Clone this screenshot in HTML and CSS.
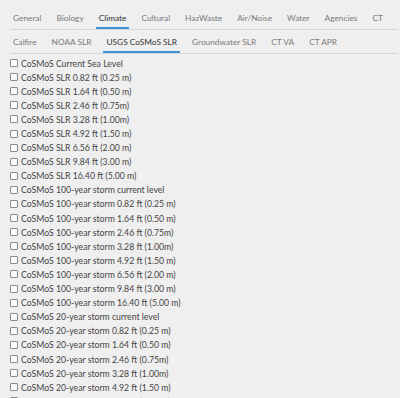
FILE: index.html
```html
<!DOCTYPE html>
<html lang="en">
<head>
    <meta charset="UTF-8">
    <meta name="viewport" content="width=device-width, initial-scale=1.0">
    <title>Layers - Climate</title>
    <link rel="stylesheet" href="styles.css">
</head>
<body>
    <div class="panel">
        <nav class="tabs">
            <a href="#">General</a>
            <a href="#">Biology</a>
            <a href="#" class="active">Climate</a>
            <a href="#">Cultural</a>
            <a href="#">HazWaste</a>
            <a href="#">Air/Noise</a>
            <a href="#">Water</a>
            <a href="#">Agencies</a>
            <a href="#">CT</a>
        </nav>
        <nav class="tabs">
            <a href="#">Calfire</a>
            <a href="#">NOAA SLR</a>
            <a href="#" class="active">USGS CoSMoS SLR</a>
            <a href="#">Groundwater SLR</a>
            <a href="#">CT VA</a>
            <a href="#">CT APR</a>
        </nav>
        <ul class="layers">
            <li><label><input type="checkbox">CoSMoS Current Sea Level</label></li>
            <li><label><input type="checkbox">CoSMoS SLR 0.82 ft (0.25 m)</label></li>
            <li><label><input type="checkbox">CoSMoS SLR 1.64 ft (0.50 m)</label></li>
            <li><label><input type="checkbox">CoSMoS SLR 2.46 ft (0.75m)</label></li>
            <li><label><input type="checkbox">CoSMoS SLR 3.28 ft (1.00m)</label></li>
            <li><label><input type="checkbox">CoSMoS SLR 4.92 ft (1.50 m)</label></li>
            <li><label><input type="checkbox">CoSMoS SLR 6.56 ft (2.00 m)</label></li>
            <li><label><input type="checkbox">CoSMoS SLR 9.84 ft (3.00 m)</label></li>
            <li><label><input type="checkbox">CoSMoS SLR 16.40 ft (5.00 m)</label></li>
            <li><label><input type="checkbox">CoSMoS 100-year storm current level</label></li>
            <li><label><input type="checkbox">CoSMoS 100-year storm 0.82 ft (0.25 m)</label></li>
            <li><label><input type="checkbox">CoSMoS 100-year storm 1.64 ft (0.50 m)</label></li>
            <li><label><input type="checkbox">CoSMoS 100-year storm 2.46 ft (0.75m)</label></li>
            <li><label><input type="checkbox">CoSMoS 100-year storm 3.28 ft (1.00m)</label></li>
            <li><label><input type="checkbox">CoSMoS 100-year storm 4.92 ft (1.50 m)</label></li>
            <li><label><input type="checkbox">CoSMoS 100-year storm 6.56 ft (2.00 m)</label></li>
            <li><label><input type="checkbox">CoSMoS 100-year storm 9.84 ft (3.00 m)</label></li>
            <li><label><input type="checkbox">CoSMoS 100-year storm 16.40 ft (5.00 m)</label></li>
            <li><label><input type="checkbox">CoSMoS 20-year storm current level</label></li>
            <li><label><input type="checkbox">CoSMoS 20-year storm 0.82 ft (0.25 m)</label></li>
            <li><label><input type="checkbox">CoSMoS 20-year storm 1.64 ft (0.50 m)</label></li>
            <li><label><input type="checkbox">CoSMoS 20-year storm 2.46 ft (0.75m)</label></li>
            <li><label><input type="checkbox">CoSMoS 20-year storm 3.28 ft (1.00m)</label></li>
            <li><label><input type="checkbox">CoSMoS 20-year storm 4.92 ft (1.50 m)</label></li>
            <li><label><input type="checkbox">CoSMoS 20-year storm 6.56 ft (2.00 m)</label></li>
        </ul>
    </div>
</body>
</html>
```

FILE: styles.css
```css
* {
    margin: 0;
    padding: 0;
    box-sizing: border-box;
}

body {
    font-family: Lato, "Liberation Sans", Arial, sans-serif;
    background: #efefef;
    color: #4a4a4a;
    overflow: hidden;
}

.panel {
    padding: 6px 2px 0 10px;
}

.tabs {
    display: flex;
    gap: 9px;
    border-bottom: 1px solid #d6d6d6;
}

.tabs a {
    padding: 3px 3px 0;
    line-height: 18px;
    font-size: 8.3px;
    color: #7a7a7a;
    text-decoration: none;
    border-bottom: 2px solid transparent;
}

.tabs a.active {
    color: #333;
    border-bottom-color: #3b93d6;
}

.layers {
    list-style: none;
    margin-top: 2px;
}

.layers li {
    height: 14.1px;
    display: flex;
    align-items: center;
}

.layers label {
    display: flex;
    align-items: center;
    font-size: 8.7px;
    color: #444;
}

.layers input {
    appearance: none;
    width: 8px;
    height: 8px;
    margin-right: 3px;
    border: 1px solid #8c8c8c;
    border-radius: 1px;
    background: #fafafa;
}
```
